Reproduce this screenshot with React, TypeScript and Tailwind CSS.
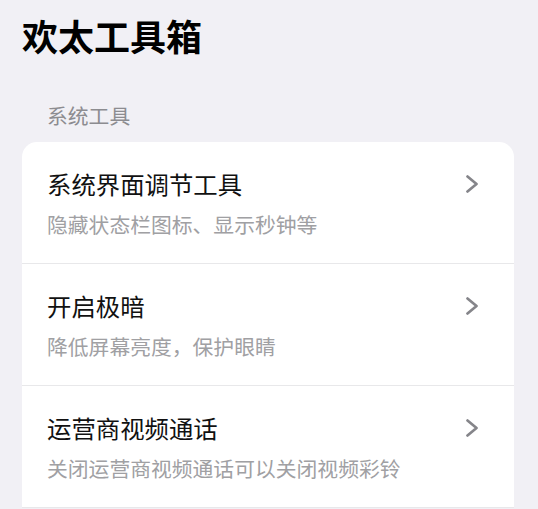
import React from "react";

const rows = [
  { title: "系统界面调节工具", sub: "隐藏状态栏图标、显示秒钟等" },
  { title: "开启极暗", sub: "降低屏幕亮度，保护眼睛" },
  { title: "运营商视频通话", sub: "关闭运营商视频通话可以关闭视频彩铃" },
];

function Chevron() {
  return (
    <svg width="12" height="18" viewBox="0 0 12 18" fill="none" className="shrink-0">
      <polyline
        points="1.5,1.5 10.5,9 1.5,16.5"
        stroke="#85858a"
        strokeWidth="2.7"
        strokeLinecap="round"
        strokeLinejoin="round"
      />
    </svg>
  );
}

export default function App() {
  return (
    <div
      className="w-[538px] h-[509px] overflow-hidden bg-[#f1f0f5]"
      style={{ fontFamily: '"Noto Sans CJK SC", "Noto Sans", sans-serif' }}
    >
      <div className="pl-[22px] pt-[11px] text-[36px] leading-[48px] font-bold text-black">
        欢太工具箱
      </div>
      <div className="pl-[47px] mt-[42px] text-[20.8px] leading-[28px] text-[#8c8c90]">
        系统工具
      </div>
      <div className="mt-[13px] ml-[22px] w-[492px] bg-white rounded-t-[15px]">
        {rows.map((r) => (
          <div
            key={r.title}
            className="pl-[25px] pr-[36px] pt-[26px] pb-[25px] border-b border-[#e8e8ea]"
          >
            <div className="flex items-center justify-between h-[32px]">
              <span className="text-[24.4px] leading-[32px] text-[#111111]">{r.title}</span>
              <Chevron />
            </div>
            <div className="mt-[10px] text-[20.8px] leading-[28px] text-[#a0a0a3]">
              {r.sub}
            </div>
          </div>
        ))}
      </div>
    </div>
  );
}
